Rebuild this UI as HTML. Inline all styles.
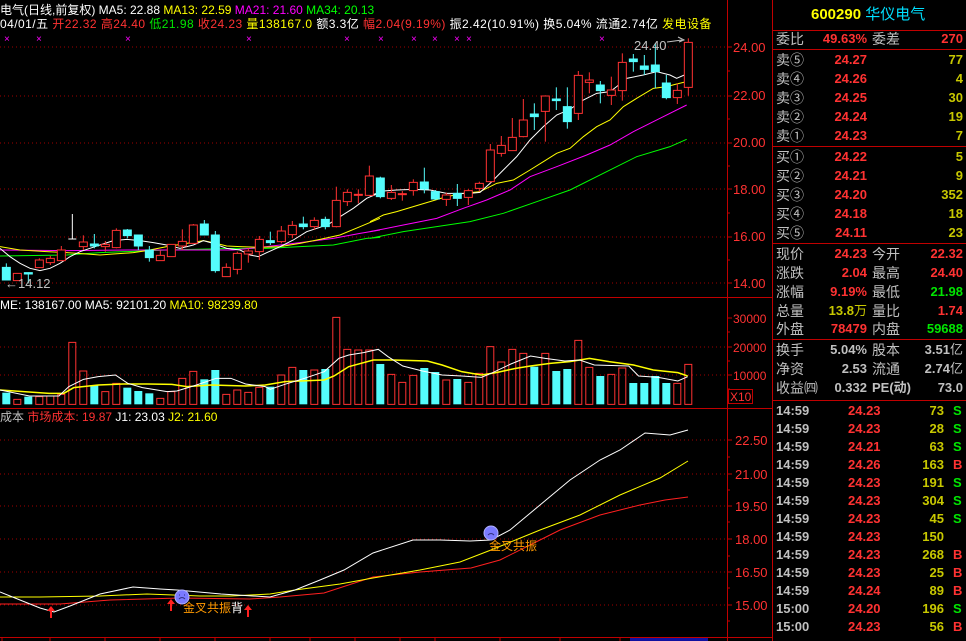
<!DOCTYPE html>
<html><head><meta charset="utf-8"><style>
*{margin:0;padding:0}
body{width:966px;height:641px;background:#000;overflow:hidden;position:relative;font-family:"Liberation Sans","Noto Sans CJK SC",sans-serif}
.t{position:absolute;white-space:nowrap;font-size:12px;line-height:14px}
.r{position:absolute;white-space:nowrap;font-size:14px;line-height:16px}
.lb{color:#c0c0c0;font-family:"Liberation Sans","Noto Sans CJK SC",sans-serif}
.n{font-weight:bold;font-size:13px;text-align:right}
.red{color:#ff3232}.yel{color:#c8c800}.grn{color:#00e600}.gry{color:#c0c0c0}
</style></head><body>
<svg width="966" height="641" style="position:absolute;left:0;top:0">
<g stroke="#a00000" stroke-dasharray="1,3" stroke-width="1">
<line x1="0" y1="47" x2="727" y2="47"/><line x1="0" y1="96" x2="727" y2="96"/><line x1="0" y1="143" x2="727" y2="143"/><line x1="0" y1="189" x2="727" y2="189"/><line x1="0" y1="237" x2="727" y2="237"/><line x1="0" y1="283" x2="727" y2="283"/>
<line x1="0" y1="347" x2="727" y2="347"/><line x1="0" y1="375" x2="727" y2="375"/>
<line x1="0" y1="440" x2="727" y2="440"/><line x1="0" y1="474" x2="727" y2="474"/><line x1="0" y1="506" x2="727" y2="506"/><line x1="0" y1="539" x2="727" y2="539"/><line x1="0" y1="572" x2="727" y2="572"/><line x1="0" y1="605" x2="727" y2="605"/>
</g>
<g stroke="#c00000" stroke-width="1" fill="none">
<line x1="727.5" y1="0" x2="727.5" y2="641"/>
<line x1="772.5" y1="0" x2="772.5" y2="641"/>
<line x1="0" y1="297.5" x2="772" y2="297.5"/>
<line x1="0" y1="408.5" x2="772" y2="408.5"/>
<line x1="0" y1="637.5" x2="772" y2="637.5"/>
<path d="M727 47h5M727 71h3M727 96h5M727 119h3M727 143h5M727 166h3M727 189h5M727 213h3M727 237h5M727 260h3M727 283h5M727 318h5M727 332h3M727 347h5M727 361h3M727 375h5M727 389h3M727 440h5M727 457h3M727 474h5M727 490h3M727 506h5M727 522h3M727 539h5M727 556h3M727 572h5M727 588h3M727 605h5M727 621h3"/>
<rect x="728.5" y="389.5" width="24" height="14"/>
<path d="M2 637v4M50 637v4M105 637v4M160 637v4M215 637v4M270 637v4M310 637v4M355 637v4M400 637v4M435 637v4M500 637v4M560 637v4M620 637v4"/>
</g>
<rect x="630" y="638" width="78" height="3" fill="#1010a0"/>
<g font-family="Liberation Sans" font-size="13" fill="#ff3232">
<text x="733" y="52">24.00</text><text x="733" y="100">22.00</text><text x="733" y="147">20.00</text><text x="733" y="194">18.00</text><text x="733" y="241">16.00</text><text x="733" y="288">14.00</text>
<text x="733" y="323" font-size="12">30000</text><text x="733" y="352" font-size="12">20000</text><text x="733" y="380" font-size="12">10000</text>
<text x="730" y="401" font-size="12">X10</text>
<text x="735" y="445">22.50</text><text x="735" y="479">21.00</text><text x="735" y="511">19.50</text><text x="735" y="544">18.00</text><text x="735" y="577">16.50</text><text x="735" y="610">15.00</text>
</g>
<g fill="#ff00ff" font-size="10" font-family="Liberation Sans">
<text x="4" y="42">×</text><text x="36" y="42">×</text><text x="125" y="42">×</text><text x="246" y="42">×</text><text x="344" y="42">×</text><text x="378" y="42">×</text><text x="411" y="42">×</text><text x="432" y="42">×</text><text x="454" y="42">×</text><text x="466" y="42">×</text><text x="599" y="42">×</text>
</g>
<g transform="translate(0,30) scale(0.33333)" fill="none" stroke-width="1">
<polyline vector-effect="non-scaling-stroke" stroke="#00ff00" points="0,678 200,675 300,668 500,660 700,655 800,655 900,650 1000,645 1100,625 1140,622"/>
<polyline vector-effect="non-scaling-stroke" stroke="#ff00ff" points="0,660 200,662 400,660 600,660 700,660 800,650 900,638 1000,625 1080,610 1140,600"/>
<polyline vector-effect="non-scaling-stroke" stroke="#ffff00" points="0,650 60,660 140,665 200,668 260,672 300,675 340,672 400,668 440,662 500,650 560,640 610,632 640,638 680,648 720,650 780,652 840,650 900,640 960,628 1020,615 1080,590 1140,565"/>
<polyline vector-effect="non-scaling-stroke" stroke="#ffffff" points="0,655 30,680 60,700 90,715 120,722 150,715 180,700 210,680 240,665 270,655 300,645 340,632 380,628 420,632 460,638 500,645 540,655 580,645 610,632 640,640 680,655 720,660 750,675 775,680 800,668 840,650 880,630 920,605 960,592 990,580 1020,560 1060,535 1100,505 1140,488"/>
</g>
<g transform="translate(370,30) scale(0.33333)" fill="none" stroke-width="1">
<polyline vector-effect="non-scaling-stroke" stroke="#00ff00" points="0,625 100,605 200,590 300,575 400,550 500,515 600,480 700,430 800,380 900,350 950,328"/>
<polyline vector-effect="non-scaling-stroke" stroke="#ff00ff" points="0,605 100,585 200,565 280,535 350,510 420,480 480,440 560,410 650,375 720,345 790,305 870,265 950,225"/>
<polyline vector-effect="non-scaling-stroke" stroke="#ffff00" points="0,575 40,555 80,545 130,530 180,515 230,500 280,490 330,485 380,460 430,450 480,420 520,395 560,370 600,355 640,320 680,290 720,270 760,230 800,205 850,175 890,170 920,162 950,155"/>
<polyline vector-effect="non-scaling-stroke" stroke="#ffffff" points="0,497 40,483 80,480 130,478 180,480 230,490 260,490 300,490 330,487 360,460 400,420 440,380 480,330 520,290 560,255 600,238 640,210 680,190 720,185 740,170 770,145 820,135 860,125 900,135 920,145 950,132"/>
</g>
<g transform="translate(0,30) scale(0.33333)" stroke-width="1">
<g stroke="#54fcfc" fill="#54fcfc">
<line vector-effect="non-scaling-stroke" x1="19" y1="700" x2="19" y2="750"/><rect vector-effect="non-scaling-stroke" x="7" y="712" width="24" height="38"/>
<line vector-effect="non-scaling-stroke" x1="85" y1="727" x2="85" y2="760"/><rect vector-effect="non-scaling-stroke" x="73" y="728" width="24" height="4"/>
<line vector-effect="non-scaling-stroke" x1="283" y1="612" x2="283" y2="655"/><rect vector-effect="non-scaling-stroke" x="271" y="642" width="24" height="6"/>
<line vector-effect="non-scaling-stroke" x1="382" y1="597" x2="382" y2="625"/><rect vector-effect="non-scaling-stroke" x="370" y="600" width="24" height="17"/>
<line vector-effect="non-scaling-stroke" x1="415" y1="615" x2="415" y2="660"/><rect vector-effect="non-scaling-stroke" x="403" y="615" width="24" height="33"/>
<line vector-effect="non-scaling-stroke" x1="448" y1="648" x2="448" y2="695"/><rect vector-effect="non-scaling-stroke" x="436" y="660" width="24" height="23"/>
<line vector-effect="non-scaling-stroke" x1="613" y1="570" x2="613" y2="615"/><rect vector-effect="non-scaling-stroke" x="601" y="582" width="24" height="33"/>
<line vector-effect="non-scaling-stroke" x1="646" y1="603" x2="646" y2="728"/><rect vector-effect="non-scaling-stroke" x="634" y="615" width="24" height="107"/>
<line vector-effect="non-scaling-stroke" x1="811" y1="605" x2="811" y2="645"/><rect vector-effect="non-scaling-stroke" x="799" y="632" width="24" height="6"/>
<line vector-effect="non-scaling-stroke" x1="910" y1="560" x2="910" y2="598"/><rect vector-effect="non-scaling-stroke" x="898" y="582" width="24" height="8"/>
<line vector-effect="non-scaling-stroke" x1="976" y1="560" x2="976" y2="598"/><rect vector-effect="non-scaling-stroke" x="964" y="568" width="24" height="22"/>
<line vector-effect="non-scaling-stroke" x1="1141" y1="440" x2="1141" y2="505"/><rect vector-effect="non-scaling-stroke" x="1129" y="444" width="24" height="56"/>
<line vector-effect="non-scaling-stroke" x1="1273" y1="413" x2="1273" y2="490"/><rect vector-effect="non-scaling-stroke" x="1261" y="456" width="24" height="21"/>
<line vector-effect="non-scaling-stroke" x1="1306" y1="480" x2="1306" y2="510"/><rect vector-effect="non-scaling-stroke" x="1294" y="485" width="24" height="22"/>
<line vector-effect="non-scaling-stroke" x1="1372" y1="462" x2="1372" y2="528"/><rect vector-effect="non-scaling-stroke" x="1360" y="490" width="24" height="15"/>
<line vector-effect="non-scaling-stroke" x1="1603" y1="220" x2="1603" y2="300"/><rect vector-effect="non-scaling-stroke" x="1591" y="252" width="24" height="8"/>
<line vector-effect="non-scaling-stroke" x1="1669" y1="172" x2="1669" y2="240"/><rect vector-effect="non-scaling-stroke" x="1657" y="207" width="24" height="5"/>
<line vector-effect="non-scaling-stroke" x1="1702" y1="172" x2="1702" y2="296"/><rect vector-effect="non-scaling-stroke" x="1690" y="230" width="24" height="45"/>
<line vector-effect="non-scaling-stroke" x1="1801" y1="153" x2="1801" y2="220"/><rect vector-effect="non-scaling-stroke" x="1789" y="165" width="24" height="17"/>
<line vector-effect="non-scaling-stroke" x1="1900" y1="72" x2="1900" y2="125"/><rect vector-effect="non-scaling-stroke" x="1888" y="87" width="24" height="8"/>
<line vector-effect="non-scaling-stroke" x1="1933" y1="75" x2="1933" y2="135"/><rect vector-effect="non-scaling-stroke" x="1921" y="108" width="24" height="10"/>
<line vector-effect="non-scaling-stroke" x1="1966" y1="40" x2="1966" y2="175"/><rect vector-effect="non-scaling-stroke" x="1954" y="105" width="24" height="20"/>
<line vector-effect="non-scaling-stroke" x1="1999" y1="135" x2="1999" y2="208"/><rect vector-effect="non-scaling-stroke" x="1987" y="159" width="24" height="44"/>
</g>
<g stroke="#ffffff"><line vector-effect="non-scaling-stroke" x1="217" y1="552" x2="217" y2="628"/><line vector-effect="non-scaling-stroke" x1="205" y1="627" x2="229" y2="627"/></g>
<g stroke="#ff3232" fill="#000">
<line vector-effect="non-scaling-stroke" x1="52" y1="730" x2="52" y2="752"/><rect vector-effect="non-scaling-stroke" x="40" y="730" width="24" height="22"/>
<line vector-effect="non-scaling-stroke" x1="118" y1="685" x2="118" y2="713"/><rect vector-effect="non-scaling-stroke" x="106" y="690" width="24" height="23"/>
<line vector-effect="non-scaling-stroke" x1="151" y1="678" x2="151" y2="705"/><rect vector-effect="non-scaling-stroke" x="139" y="685" width="24" height="13"/>
<line vector-effect="non-scaling-stroke" x1="184" y1="648" x2="184" y2="692"/><rect vector-effect="non-scaling-stroke" x="172" y="660" width="24" height="32"/>
<line vector-effect="non-scaling-stroke" x1="250" y1="616" x2="250" y2="660"/><rect vector-effect="non-scaling-stroke" x="238" y="636" width="24" height="14"/>
<line vector-effect="non-scaling-stroke" x1="316" y1="633" x2="316" y2="665"/><rect vector-effect="non-scaling-stroke" x="304" y="643" width="24" height="7"/>
<line vector-effect="non-scaling-stroke" x1="349" y1="595" x2="349" y2="655"/><rect vector-effect="non-scaling-stroke" x="337" y="601" width="24" height="52"/>
<line vector-effect="non-scaling-stroke" x1="481" y1="662" x2="481" y2="692"/><rect vector-effect="non-scaling-stroke" x="469" y="676" width="24" height="16"/>
<line vector-effect="non-scaling-stroke" x1="514" y1="643" x2="514" y2="680"/><rect vector-effect="non-scaling-stroke" x="502" y="643" width="24" height="37"/>
<line vector-effect="non-scaling-stroke" x1="547" y1="598" x2="547" y2="660"/><rect vector-effect="non-scaling-stroke" x="535" y="634" width="24" height="14"/>
<line vector-effect="non-scaling-stroke" x1="580" y1="582" x2="580" y2="640"/><rect vector-effect="non-scaling-stroke" x="568" y="585" width="24" height="55"/>
<line vector-effect="non-scaling-stroke" x1="679" y1="700" x2="679" y2="740"/><rect vector-effect="non-scaling-stroke" x="667" y="712" width="24" height="28"/>
<line vector-effect="non-scaling-stroke" x1="712" y1="665" x2="712" y2="733"/><rect vector-effect="non-scaling-stroke" x="700" y="670" width="24" height="48"/>
<line vector-effect="non-scaling-stroke" x1="745" y1="655" x2="745" y2="698"/><rect vector-effect="non-scaling-stroke" x="733" y="663" width="24" height="9"/>
<line vector-effect="non-scaling-stroke" x1="778" y1="618" x2="778" y2="690"/><rect vector-effect="non-scaling-stroke" x="766" y="628" width="24" height="37"/>
<line vector-effect="non-scaling-stroke" x1="844" y1="588" x2="844" y2="640"/><rect vector-effect="non-scaling-stroke" x="832" y="603" width="24" height="32"/>
<line vector-effect="non-scaling-stroke" x1="877" y1="573" x2="877" y2="625"/><rect vector-effect="non-scaling-stroke" x="865" y="586" width="24" height="28"/>
<line vector-effect="non-scaling-stroke" x1="943" y1="562" x2="943" y2="600"/><rect vector-effect="non-scaling-stroke" x="931" y="571" width="24" height="19"/>
<line vector-effect="non-scaling-stroke" x1="1009" y1="470" x2="1009" y2="592"/><rect vector-effect="non-scaling-stroke" x="997" y="511" width="24" height="79"/>
<line vector-effect="non-scaling-stroke" x1="1042" y1="478" x2="1042" y2="528"/><rect vector-effect="non-scaling-stroke" x="1030" y="487" width="24" height="28"/>
<line vector-effect="non-scaling-stroke" x1="1075" y1="478" x2="1075" y2="520"/><rect vector-effect="non-scaling-stroke" x="1063" y="493" width="24" height="3"/>
<line vector-effect="non-scaling-stroke" x1="1108" y1="407" x2="1108" y2="498"/><rect vector-effect="non-scaling-stroke" x="1096" y="438" width="24" height="58"/>
<line vector-effect="non-scaling-stroke" x1="1174" y1="465" x2="1174" y2="510"/><rect vector-effect="non-scaling-stroke" x="1162" y="487" width="24" height="18"/>
<line vector-effect="non-scaling-stroke" x1="1207" y1="483" x2="1207" y2="512"/><rect vector-effect="non-scaling-stroke" x="1195" y="491" width="24" height="3"/>
<line vector-effect="non-scaling-stroke" x1="1240" y1="448" x2="1240" y2="497"/><rect vector-effect="non-scaling-stroke" x="1228" y="457" width="24" height="25"/>
<line vector-effect="non-scaling-stroke" x1="1339" y1="488" x2="1339" y2="528"/><rect vector-effect="non-scaling-stroke" x="1327" y="495" width="24" height="13"/>
<line vector-effect="non-scaling-stroke" x1="1405" y1="478" x2="1405" y2="525"/><rect vector-effect="non-scaling-stroke" x="1393" y="482" width="24" height="20"/>
<line vector-effect="non-scaling-stroke" x1="1438" y1="455" x2="1438" y2="485"/><rect vector-effect="non-scaling-stroke" x="1426" y="460" width="24" height="15"/>
<line vector-effect="non-scaling-stroke" x1="1471" y1="342" x2="1471" y2="458"/><rect vector-effect="non-scaling-stroke" x="1459" y="360" width="24" height="95"/>
<line vector-effect="non-scaling-stroke" x1="1504" y1="318" x2="1504" y2="380"/><rect vector-effect="non-scaling-stroke" x="1492" y="346" width="24" height="24"/>
<line vector-effect="non-scaling-stroke" x1="1537" y1="264" x2="1537" y2="362"/><rect vector-effect="non-scaling-stroke" x="1525" y="322" width="24" height="40"/>
<line vector-effect="non-scaling-stroke" x1="1570" y1="207" x2="1570" y2="322"/><rect vector-effect="non-scaling-stroke" x="1558" y="270" width="24" height="50"/>
<line vector-effect="non-scaling-stroke" x1="1636" y1="196" x2="1636" y2="335"/><rect vector-effect="non-scaling-stroke" x="1624" y="198" width="24" height="46"/>
<line vector-effect="non-scaling-stroke" x1="1735" y1="123" x2="1735" y2="270"/><rect vector-effect="non-scaling-stroke" x="1723" y="136" width="24" height="114"/>
<line vector-effect="non-scaling-stroke" x1="1768" y1="127" x2="1768" y2="190"/><rect vector-effect="non-scaling-stroke" x="1756" y="150" width="24" height="7"/>
<line vector-effect="non-scaling-stroke" x1="1834" y1="140" x2="1834" y2="225"/><rect vector-effect="non-scaling-stroke" x="1822" y="180" width="24" height="16"/>
<line vector-effect="non-scaling-stroke" x1="1867" y1="70" x2="1867" y2="212"/><rect vector-effect="non-scaling-stroke" x="1855" y="97" width="24" height="85"/>
<line vector-effect="non-scaling-stroke" x1="2032" y1="160" x2="2032" y2="222"/><rect vector-effect="non-scaling-stroke" x="2020" y="181" width="24" height="22"/>
<line vector-effect="non-scaling-stroke" x1="2065" y1="25" x2="2065" y2="197"/><rect vector-effect="non-scaling-stroke" x="2053" y="37" width="24" height="135"/>
</g>
</g>
<text x="634" y="50" fill="#c0c0c0" font-size="13" font-family="Liberation Sans">24.40</text>
<path d="M667 42 L682 40 M678 37 L684 40 L679 42" stroke="#c0c0c0" fill="none"/>
<text x="5" y="288" fill="#c0c0c0" font-size="13" font-family="Liberation Sans">←14.12</text>
<g transform="translate(0,290) scale(1,0.33333)">
<g fill="#54fcfc">
<rect x="2.3" y="308" width="8" height="35"/><rect x="24.3" y="320" width="8" height="23"/><rect x="90.3" y="286" width="8" height="57"/><rect x="123.3" y="293" width="8" height="50"/><rect x="134.3" y="303" width="8" height="40"/><rect x="145.3" y="310" width="8" height="33"/><rect x="200.3" y="268" width="8" height="75"/><rect x="211.3" y="240" width="8" height="103"/><rect x="266.3" y="290" width="8" height="53"/><rect x="299.3" y="240" width="8" height="103"/><rect x="321.3" y="237" width="8" height="106"/><rect x="376.3" y="222" width="8" height="121"/><rect x="420.3" y="234" width="8" height="109"/><rect x="431.3" y="246" width="8" height="97"/><rect x="453.3" y="267" width="8" height="76"/><rect x="530.3" y="230" width="8" height="113"/><rect x="552.3" y="243" width="8" height="100"/><rect x="563.3" y="237" width="8" height="106"/><rect x="596.3" y="258" width="8" height="85"/><rect x="629.3" y="279" width="8" height="64"/><rect x="640.3" y="279" width="8" height="64"/><rect x="651.3" y="258" width="8" height="85"/><rect x="662.3" y="279" width="8" height="64"/>
</g>
<g fill="none" stroke="#ff3232">
<rect vector-effect="non-scaling-stroke" x="13.8" y="328" width="7" height="15"/><rect vector-effect="non-scaling-stroke" x="35.8" y="320" width="7" height="23"/><rect vector-effect="non-scaling-stroke" x="46.8" y="318" width="7" height="25"/><rect vector-effect="non-scaling-stroke" x="57.8" y="313" width="7" height="30"/><rect vector-effect="non-scaling-stroke" x="68.8" y="157" width="7" height="186"/><rect vector-effect="non-scaling-stroke" x="79.8" y="243" width="7" height="100"/><rect vector-effect="non-scaling-stroke" x="101.8" y="305" width="7" height="38"/><rect vector-effect="non-scaling-stroke" x="112.8" y="280" width="7" height="63"/><rect vector-effect="non-scaling-stroke" x="156.8" y="325" width="7" height="18"/><rect vector-effect="non-scaling-stroke" x="167.8" y="305" width="7" height="38"/><rect vector-effect="non-scaling-stroke" x="178.8" y="265" width="7" height="78"/><rect vector-effect="non-scaling-stroke" x="189.8" y="244" width="7" height="99"/><rect vector-effect="non-scaling-stroke" x="222.8" y="313" width="7" height="30"/><rect vector-effect="non-scaling-stroke" x="233.8" y="300" width="7" height="43"/><rect vector-effect="non-scaling-stroke" x="244.8" y="307" width="7" height="36"/><rect vector-effect="non-scaling-stroke" x="255.8" y="292" width="7" height="51"/><rect vector-effect="non-scaling-stroke" x="277.8" y="255" width="7" height="88"/><rect vector-effect="non-scaling-stroke" x="288.8" y="232" width="7" height="111"/><rect vector-effect="non-scaling-stroke" x="310.8" y="240" width="7" height="103"/><rect vector-effect="non-scaling-stroke" x="332.8" y="82" width="7" height="261"/><rect vector-effect="non-scaling-stroke" x="343.8" y="178" width="7" height="165"/><rect vector-effect="non-scaling-stroke" x="354.8" y="180" width="7" height="163"/><rect vector-effect="non-scaling-stroke" x="365.8" y="180" width="7" height="163"/><rect vector-effect="non-scaling-stroke" x="387.8" y="253" width="7" height="90"/><rect vector-effect="non-scaling-stroke" x="398.8" y="277" width="7" height="66"/><rect vector-effect="non-scaling-stroke" x="409.8" y="256" width="7" height="87"/><rect vector-effect="non-scaling-stroke" x="442.8" y="270" width="7" height="73"/><rect vector-effect="non-scaling-stroke" x="464.8" y="277" width="7" height="66"/><rect vector-effect="non-scaling-stroke" x="475.8" y="250" width="7" height="93"/><rect vector-effect="non-scaling-stroke" x="486.8" y="170" width="7" height="173"/><rect vector-effect="non-scaling-stroke" x="497.8" y="216" width="7" height="127"/><rect vector-effect="non-scaling-stroke" x="508.8" y="178" width="7" height="165"/><rect vector-effect="non-scaling-stroke" x="519.8" y="190" width="7" height="153"/><rect vector-effect="non-scaling-stroke" x="541.8" y="190" width="7" height="153"/><rect vector-effect="non-scaling-stroke" x="574.8" y="151" width="7" height="192"/><rect vector-effect="non-scaling-stroke" x="585.8" y="232" width="7" height="111"/><rect vector-effect="non-scaling-stroke" x="607.8" y="253" width="7" height="90"/><rect vector-effect="non-scaling-stroke" x="618.8" y="234" width="7" height="109"/><rect vector-effect="non-scaling-stroke" x="673.8" y="280" width="7" height="63"/><rect vector-effect="non-scaling-stroke" x="684.8" y="223" width="7" height="120"/>
</g>
</g>
<g transform="translate(0,290) scale(0.4912,0.33333)" fill="none">
<polyline vector-effect="non-scaling-stroke" stroke="#ffff00" stroke-width="1.5" points="0,300 100,310 130,310 150,293 200,285 250,282 300,282 350,283 380,290 430,285 500,288 540,285 580,275 660,270 680,258 710,230 760,210 800,210 870,213 900,225 940,245 980,255 1010,248 1050,235 1080,228 1120,220 1160,215 1200,205 1240,215 1290,225 1330,240 1380,248 1400,258"/>
<polyline vector-effect="non-scaling-stroke" stroke="#ffffff" points="0,300 60,318 120,318 140,290 170,268 200,260 235,255 260,280 290,293 340,305 360,303 400,285 440,265 470,265 500,282 540,290 550,298 580,283 620,265 660,245 690,205 710,195 740,188 770,178 790,200 820,228 860,243 900,255 940,258 980,262 1000,250 1040,222 1080,198 1110,205 1150,213 1180,210 1210,225 1280,228 1300,258 1340,262 1380,273 1400,260"/>
</g>
<g fill="none" stroke-width="1">
<polyline stroke="#ff2020" points="0,604 60,604 110,600 180,598 250,599 280,597 324,593 373,577 420,572 471,568 500,560 540,540 560,530 600,515 640,505 665,500 688,497"/>
<polyline stroke="#ffff00" points="0,597 40,597 100,596 147,594 200,596 231,596 270,594 295,590 340,584 373,578 420,570 460,562 491,550 540,530 580,515 620,495 660,478 688,461"/>
<polyline stroke="#ffffff" points="0,592 20,600 40,608 54,612 70,606 100,594 133,587 160,589 177,590 221,594 270,597 295,590 320,580 344,570 373,553 413,540 440,540 470,541 491,540 510,530 540,505 570,480 600,460 620,450 645,433 670,435 688,430"/>
</g>
<circle cx="182" cy="597" r="7" fill="#7a7aff" stroke="#b0b0ff"/>
<circle cx="491" cy="533" r="7" fill="#7a7aff" stroke="#b0b0ff"/>
<path d="M179 599q3-3 6 0M179 595h1M184 595h1" stroke="#303080" fill="none"/>
<path d="M488 535q3-3 6 0" stroke="#303080" fill="none"/>
<g fill="#ff2020"><path d="M51 606l-4 5h3v7h2v-7h3z"/><path d="M171 599l-4 5h3v7h2v-7h3z"/><path d="M248 605l-4 5h3v7h2v-7h3z"/></g>
<text x="183" y="612" fill="#ff9900" font-size="12" font-family="Noto Sans CJK SC">金叉共振<tspan fill="#ffffff">背</tspan></text>
<text x="489" y="550" fill="#ff9900" font-size="12" font-family="Noto Sans CJK SC">金叉共振</text>
</svg>

<div class="t" style="left:0;top:3px;color:#fff">电气(日线,前复权) MA5: 22.88 <span style="color:#ffff00">MA13: 22.59</span> <span style="color:#ff00ff">MA21: 21.60</span> <span style="color:#00ff00">MA34: 20.13</span></div>
<div class="t" style="left:0;top:17px;color:#fff;letter-spacing:0.45px">04/01/五 <span class="red">开22.32 高24.40</span> <span class="grn">低21.98</span> <span class="red">收24.23</span> <span style="color:#ffff00">量138167.0</span> 额3.3亿 <span class="red">幅2.04(9.19%)</span> 振2.42(10.91%) 换5.04% 流通2.74亿 <span style="color:#ffff00">发电设备</span></div>
<div class="t" style="left:0;top:298px;color:#fff">ME: 138167.00 MA5: 92101.20 <span style="color:#ffff00">MA10: 98239.80</span></div>
<div class="t" style="left:0;top:410px;color:#c0c0c0">成本 <span class="red">市场成本: 19.87</span> <span style="color:#fff">J1: 23.03</span> <span style="color:#ffff00">J2: 21.60</span></div>

<div style="position:absolute;left:773px;top:0;width:193px;height:641px">
<div style="position:absolute;left:0;right:0;top:30px;border-top:1px solid #c00000"></div>
<div style="position:absolute;left:0;right:0;top:49px;border-top:1px solid #c00000"></div>
<div style="position:absolute;left:0;right:0;top:146px;border-top:1px solid #c00000"></div>
<div style="position:absolute;left:0;right:0;top:243px;border-top:1px solid #c00000"></div>
<div style="position:absolute;left:0;right:0;top:339px;border-top:1px solid #c00000"></div>
<div style="position:absolute;left:0;right:0;top:400px;border-top:1px solid #c00000"></div>
<div class="r" style="left:38px;top:7px;font-size:15px;font-weight:bold;color:#ffff00">600290 <span style="color:#00e0ff;font-weight:normal">华仪电气</span></div>
</div>
<div style="position:absolute;left:773px;top:0;width:193px;font-size:14px">
<div class="r lb" style="left:3px;top:31px">委比</div><div class="r n red" style="left:40px;width:54px;top:31px">49.63%</div><div class="r lb" style="left:99px;top:31px">委差</div><div class="r n red" style="left:140px;width:50px;top:31px">270</div>

<div class="r lb" style="left:3px;top:52px">卖⑤</div><div class="r n red" style="left:40px;width:54px;top:52px">24.27</div><div class="r n yel" style="left:140px;width:50px;top:52px">77</div>
<div class="r lb" style="left:3px;top:71px">卖④</div><div class="r n red" style="left:40px;width:54px;top:71px">24.26</div><div class="r n yel" style="left:140px;width:50px;top:71px">4</div>
<div class="r lb" style="left:3px;top:90px">卖③</div><div class="r n red" style="left:40px;width:54px;top:90px">24.25</div><div class="r n yel" style="left:140px;width:50px;top:90px">30</div>
<div class="r lb" style="left:3px;top:109px">卖②</div><div class="r n red" style="left:40px;width:54px;top:109px">24.24</div><div class="r n yel" style="left:140px;width:50px;top:109px">19</div>
<div class="r lb" style="left:3px;top:128px">卖①</div><div class="r n red" style="left:40px;width:54px;top:128px">24.23</div><div class="r n yel" style="left:140px;width:50px;top:128px">7</div>

<div class="r lb" style="left:3px;top:149px">买①</div><div class="r n red" style="left:40px;width:54px;top:149px">24.22</div><div class="r n yel" style="left:140px;width:50px;top:149px">5</div>
<div class="r lb" style="left:3px;top:168px">买②</div><div class="r n red" style="left:40px;width:54px;top:168px">24.21</div><div class="r n yel" style="left:140px;width:50px;top:168px">9</div>
<div class="r lb" style="left:3px;top:187px">买③</div><div class="r n red" style="left:40px;width:54px;top:187px">24.20</div><div class="r n yel" style="left:140px;width:50px;top:187px">352</div>
<div class="r lb" style="left:3px;top:206px">买④</div><div class="r n red" style="left:40px;width:54px;top:206px">24.18</div><div class="r n yel" style="left:140px;width:50px;top:206px">18</div>
<div class="r lb" style="left:3px;top:225px">买⑤</div><div class="r n red" style="left:40px;width:54px;top:225px">24.11</div><div class="r n yel" style="left:140px;width:50px;top:225px">23</div>

<div class="r lb" style="left:3px;top:246px">现价</div><div class="r n red" style="left:40px;width:54px;top:246px">24.23</div><div class="r lb" style="left:99px;top:246px">今开</div><div class="r n red" style="left:140px;width:50px;top:246px">22.32</div>
<div class="r lb" style="left:3px;top:265px">涨跌</div><div class="r n red" style="left:40px;width:54px;top:265px">2.04</div><div class="r lb" style="left:99px;top:265px">最高</div><div class="r n red" style="left:140px;width:50px;top:265px">24.40</div>
<div class="r lb" style="left:3px;top:284px">涨幅</div><div class="r n red" style="left:40px;width:54px;top:284px">9.19%</div><div class="r lb" style="left:99px;top:284px">最低</div><div class="r n grn" style="left:140px;width:50px;top:284px">21.98</div>
<div class="r lb" style="left:3px;top:303px">总量</div><div class="r n yel" style="left:40px;width:54px;top:303px">13.8<span style="font-weight:normal">万</span></div><div class="r lb" style="left:99px;top:303px">量比</div><div class="r n red" style="left:140px;width:50px;top:303px">1.74</div>
<div class="r lb" style="left:3px;top:321px">外盘</div><div class="r n red" style="left:40px;width:54px;top:321px">78479</div><div class="r lb" style="left:99px;top:321px">内盘</div><div class="r n grn" style="left:140px;width:50px;top:321px">59688</div>

<div class="r lb" style="left:3px;top:342px">换手</div><div class="r n gry" style="left:40px;width:54px;top:342px">5.04%</div><div class="r lb" style="left:99px;top:342px">股本</div><div class="r n gry" style="left:140px;width:50px;top:342px">3.51<span style="font-weight:normal">亿</span></div>
<div class="r lb" style="left:3px;top:361px">净资</div><div class="r n gry" style="left:40px;width:54px;top:361px">2.53</div><div class="r lb" style="left:99px;top:361px">流通</div><div class="r n gry" style="left:140px;width:50px;top:361px">2.74<span style="font-weight:normal">亿</span></div>
<div class="r lb" style="left:3px;top:380px">收益㈣</div><div class="r n gry" style="left:40px;width:54px;top:380px">0.332</div><div class="r n gry" style="left:99px;top:380px;text-align:left">PE(动)</div><div class="r n gry" style="left:140px;width:50px;top:380px">73.0</div>
</div>

<div style="position:absolute;left:773px;top:402px;width:193px;font-size:13px;font-weight:bold;line-height:18px">
<div style="position:relative;height:18px"><span class="gry" style="position:absolute;left:3px">14:59</span><span class="red" style="position:absolute;left:75px">24.23</span><span class="yel" style="position:absolute;right:22px">73</span><span class="grn" style="position:absolute;left:180px">S</span></div>
<div style="position:relative;height:18px"><span class="gry" style="position:absolute;left:3px">14:59</span><span class="red" style="position:absolute;left:75px">24.23</span><span class="yel" style="position:absolute;right:22px">28</span><span class="grn" style="position:absolute;left:180px">S</span></div>
<div style="position:relative;height:18px"><span class="gry" style="position:absolute;left:3px">14:59</span><span class="red" style="position:absolute;left:75px">24.21</span><span class="yel" style="position:absolute;right:22px">63</span><span class="grn" style="position:absolute;left:180px">S</span></div>
<div style="position:relative;height:18px"><span class="gry" style="position:absolute;left:3px">14:59</span><span class="red" style="position:absolute;left:75px">24.26</span><span class="yel" style="position:absolute;right:22px">163</span><span class="red" style="position:absolute;left:180px">B</span></div>
<div style="position:relative;height:18px"><span class="gry" style="position:absolute;left:3px">14:59</span><span class="red" style="position:absolute;left:75px">24.23</span><span class="yel" style="position:absolute;right:22px">191</span><span class="grn" style="position:absolute;left:180px">S</span></div>
<div style="position:relative;height:18px"><span class="gry" style="position:absolute;left:3px">14:59</span><span class="red" style="position:absolute;left:75px">24.23</span><span class="yel" style="position:absolute;right:22px">304</span><span class="grn" style="position:absolute;left:180px">S</span></div>
<div style="position:relative;height:18px"><span class="gry" style="position:absolute;left:3px">14:59</span><span class="red" style="position:absolute;left:75px">24.23</span><span class="yel" style="position:absolute;right:22px">45</span><span class="grn" style="position:absolute;left:180px">S</span></div>
<div style="position:relative;height:18px"><span class="gry" style="position:absolute;left:3px">14:59</span><span class="red" style="position:absolute;left:75px">24.23</span><span class="yel" style="position:absolute;right:22px">150</span></div>
<div style="position:relative;height:18px"><span class="gry" style="position:absolute;left:3px">14:59</span><span class="red" style="position:absolute;left:75px">24.23</span><span class="yel" style="position:absolute;right:22px">268</span><span class="red" style="position:absolute;left:180px">B</span></div>
<div style="position:relative;height:18px"><span class="gry" style="position:absolute;left:3px">14:59</span><span class="red" style="position:absolute;left:75px">24.23</span><span class="yel" style="position:absolute;right:22px">25</span><span class="red" style="position:absolute;left:180px">B</span></div>
<div style="position:relative;height:18px"><span class="gry" style="position:absolute;left:3px">14:59</span><span class="red" style="position:absolute;left:75px">24.24</span><span class="yel" style="position:absolute;right:22px">89</span><span class="red" style="position:absolute;left:180px">B</span></div>
<div style="position:relative;height:18px"><span class="gry" style="position:absolute;left:3px">15:00</span><span class="red" style="position:absolute;left:75px">24.20</span><span class="yel" style="position:absolute;right:22px">196</span><span class="grn" style="position:absolute;left:180px">S</span></div>
<div style="position:relative;height:18px"><span class="gry" style="position:absolute;left:3px">15:00</span><span class="red" style="position:absolute;left:75px">24.23</span><span class="yel" style="position:absolute;right:22px">56</span><span class="red" style="position:absolute;left:180px">B</span></div>
</div>
</body></html>
